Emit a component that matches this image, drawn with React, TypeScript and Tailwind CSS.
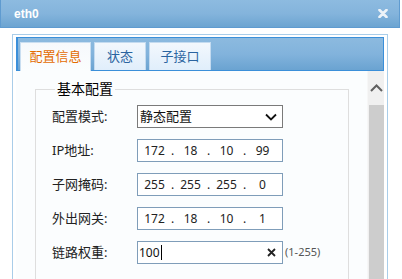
import React from "react";

const cjk = { fontFamily: '"Noto Sans", "Noto Sans CJK SC", sans-serif' };

function IpBox({ parts }: { parts: string[] }) {
  return (
    <div className="flex h-[23px] w-[146px] items-center border border-[#7f9db9] bg-white text-[12px] text-[#222]">
      {parts.map((p, i) => (
        <div key={i} className="flex w-[36px] items-center">
          <span className="w-[33px] text-center">{p}</span>
          <span className="w-[3px] text-center">{i < 3 ? "." : ""}</span>
        </div>
      ))}
    </div>
  );
}

function Row({ label, children }: { label: string; children: React.ReactNode }) {
  return (
    <div className="flex h-[23px] items-center">
      <div className="w-[85px] text-[13px] text-[#222]">{label}</div>
      {children}
    </div>
  );
}

export default function App() {
  return (
    <div className="relative h-[279px] w-[402px] overflow-hidden bg-white" style={cjk}>
      {/* title bar */}
      <div className="flex h-[28px] w-[400px] items-center justify-between border border-t-0 border-[#5f9bd0] bg-gradient-to-b from-[#8dbbe0] via-[#84b4dc] to-[#6ca4d1] pl-[13px] pr-[11px]">
        <span className="text-[12px] font-bold text-white" style={{ fontFamily: '"Liberation Sans", sans-serif' }}>
          eth0
        </span>
        <svg width="10" height="9" viewBox="0 0 10 9">
          <path d="M1.5 1 L8.5 8 M8.5 1 L1.5 8" stroke="#eef3f8" strokeWidth="2.6" strokeLinecap="round" />
        </svg>
      </div>

      {/* outer panel */}
      <div className="ml-[12px] mt-[6px] h-[245px] w-[376px] border border-b-0 border-[#a9cde9] px-[3px] pt-[2px]">
        {/* tab header */}
        <div className="relative flex h-[34px] items-end border border-[#3b8fd9] border-l-2 bg-gradient-to-b from-[#8cbadf] via-[#82b3dc] to-[#6aa3d1] pl-[2px]">
          <div className="relative -mb-px flex h-[29px] w-[71px] items-center justify-center border border-b-0 border-[#c9def1] bg-gradient-to-b from-[#f6f9fc] to-[#fbfdfe] text-[13px] text-[#e46c00]">
            配置信息
          </div>
          <div className="ml-[3px] flex h-[28px] w-[52px] items-center justify-center border border-b-0 border-[#c4dbf0] bg-gradient-to-b from-[#f3f8fd] to-[#e0eefb] text-[13px] text-[#2a64a0]">
            状态
          </div>
          <div className="ml-[3px] flex h-[28px] w-[62px] items-center justify-center border border-b-0 border-[#c4dbf0] bg-gradient-to-b from-[#f3f8fd] to-[#e0eefb] text-[13px] text-[#2a64a0]">
            子接口
          </div>
        </div>

        {/* content */}
        <div className="flex h-[208px] bg-[#fbfdfe]">
          <div className="flex-1 pl-[19px] pt-[9px]">
            <fieldset className="h-[220px] w-[314px] border border-[#dedede] pl-[16px]">
              <legend className="ml-[3px] px-[2px] text-[14px] leading-[18px] text-black">基本配置</legend>
              <div className="mt-[7px] flex flex-col gap-[11px]">
                <Row label="配置模式:">
                  <div className="flex h-[23px] w-[146px] items-center justify-between border border-[#7a7a7a] bg-white pl-[2px] pr-[5px] text-[13px] text-[#111]">
                    <span>静态配置</span>
                    <svg width="12" height="8" viewBox="0 0 12 8">
                      <path d="M1 1.5 L6 6.5 L11 1.5" fill="none" stroke="#111" strokeWidth="1.8" />
                    </svg>
                  </div>
                </Row>
                <Row label="IP地址:">
                  <IpBox parts={["172", "18", "10", "99"]} />
                </Row>
                <Row label="子网掩码:">
                  <IpBox parts={["255", "255", "255", "0"]} />
                </Row>
                <Row label="外出网关:">
                  <IpBox parts={["172", "18", "10", "1"]} />
                </Row>
                <Row label="链路权重:">
                  <div className="flex h-[23px] w-[146px] items-center justify-between border border-[#7f9db9] bg-white pl-[1px] pr-[6px] text-[12px] text-[#111]">
                    <span className="flex items-center">
                      100<span className="ml-px inline-block h-[15px] w-px bg-black" />
                    </span>
                    <svg width="9" height="9" viewBox="0 0 9 9">
                      <path d="M1 1 L8 8 M8 1 L1 8" stroke="#222" strokeWidth="1.8" />
                    </svg>
                  </div>
                  <span className="ml-[2px] text-[11px] text-[#555]">(1-255)</span>
                </Row>
              </div>
            </fieldset>
          </div>

          {/* scrollbar */}
          <div className="flex w-[17px] flex-col border-l border-[#f7f7f7] bg-[#f0f0f0]">
            <div className="flex h-[34px] items-center justify-center">
              <svg width="13" height="8" viewBox="0 0 13 8">
                <path d="M1 7 L6.5 1.5 L12 7" fill="none" stroke="#606060" strokeWidth="2" />
              </svg>
            </div>
            <div className="ml-px flex-1 bg-[#cdcdcd]" />
          </div>
        </div>
      </div>
    </div>
  );
}
